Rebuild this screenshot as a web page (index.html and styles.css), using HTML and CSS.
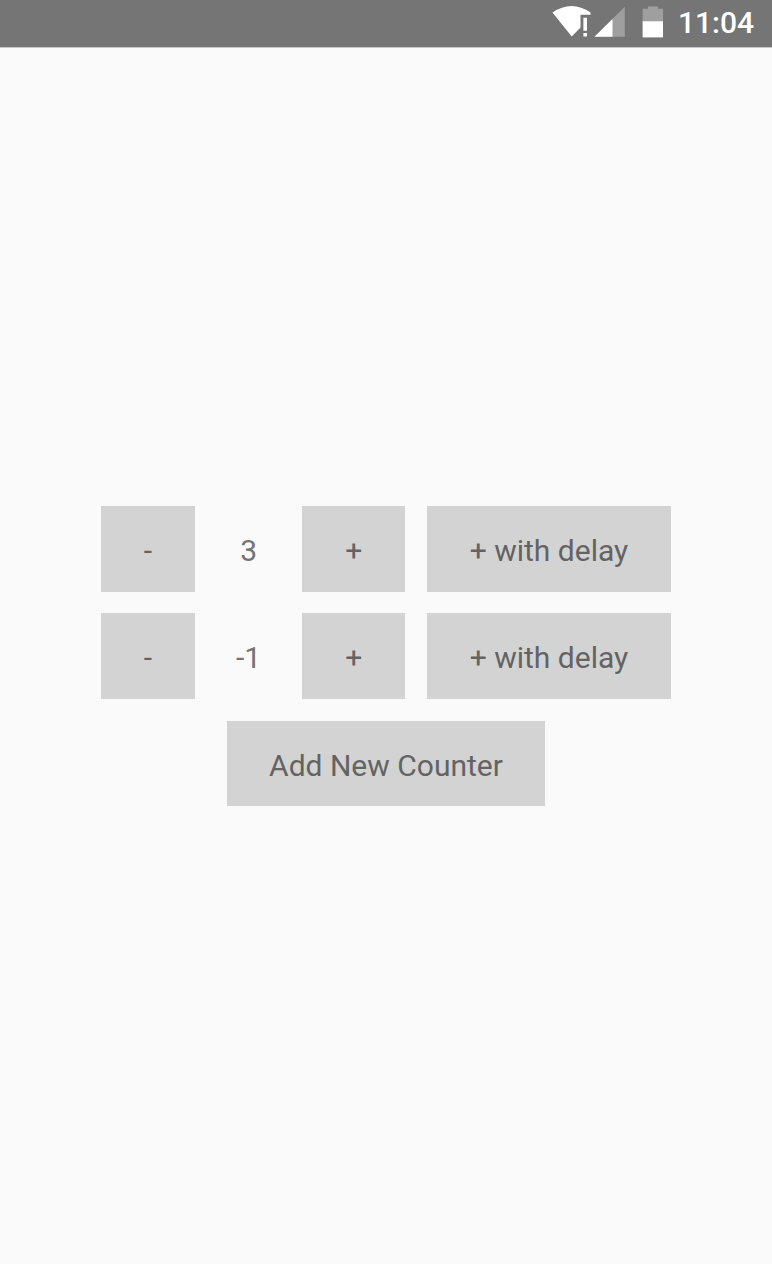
FILE: index.html
```html
<!DOCTYPE html>
<html lang="en">
<head>
<meta charset="utf-8">
<title>Counters</title>
<link rel="stylesheet" href="styles.css">
</head>
<body>
<header class="status">
  <svg class="icons" width="124" height="47" viewBox="546 0 124 47">
    <path fill="#fff" d="M552.5 12.5Q571.5 -.5 590.5 12.5V14.8H580.5V27.5L571.7 36.5Z"/>
    <path fill="#fff" d="M583.4 17.8h3.6v13h-3.6zM583.4 33h3.6v3.6h-3.6z"/>
    <path fill="#9f9f9f" d="M624.8 6.8V36.7H594.5Z"/>
    <path fill="#fff" d="M612.5 18.9V36.7H594.5Z"/>
    <path fill="#9f9f9f" d="M648 6.4h10v2.4h5V22h-20.4V8.8H648z"/>
    <path fill="#fff" d="M642.6 21.3H663v16.1h-20.4z"/>
  </svg>
  <span class="clock">11:04</span>
</header>
<main class="counters">
  <div class="row">
    <button class="btn minus">-</button>
    <span class="value">3</span>
    <button class="btn plus">+</button>
    <button class="btn delay">+ with delay</button>
  </div>
  <div class="row">
    <button class="btn minus">-</button>
    <span class="value">-1</span>
    <button class="btn plus">+</button>
    <button class="btn delay">+ with delay</button>
  </div>
  <button class="btn add">Add New Counter</button>
</main>
</body>
</html>
```
FILE: styles.css
```css
* { box-sizing: border-box; }
body {
  margin: 0;
  height: 1264px;
  display: flex;
  flex-direction: column;
  background: #fafafa;
  color: #737373;
  font-family: Roboto, sans-serif;
  font-size: 30px;
  -webkit-font-smoothing: antialiased;
}
.status {
  height: 47px;
  flex: none;
  display: flex;
  justify-content: flex-end;
  padding-right: 18px;
  background: #757575;
  color: #fff;
  box-shadow: 0 1px 0 #c8c8c8;
}
.icons { flex: none; margin-right: 8px; }
.clock { width: 76px; font-weight: 500; line-height: 46px; white-space: nowrap; }
.counters {
  flex: 1;
  display: flex;
  flex-direction: column;
  align-items: center;
  gap: 21.5px;
  padding-top: 459px;
}
.row { display: flex; height: 85.8px; }
.btn {
  height: 85.8px;
  padding: 4px 0 0;
  border: 0;
  background: #d3d3d3;
  color: #636363;
  font: inherit;
  line-height: 82px;
  white-space: nowrap;
}
.minus { width: 94px; }
.value { width: 107.3px; text-align: center; line-height: 90px; }
.plus { width: 102.9px; margin-right: 21.8px; }
.delay { width: 244px; }
.add { width: 318.7px; }
```
